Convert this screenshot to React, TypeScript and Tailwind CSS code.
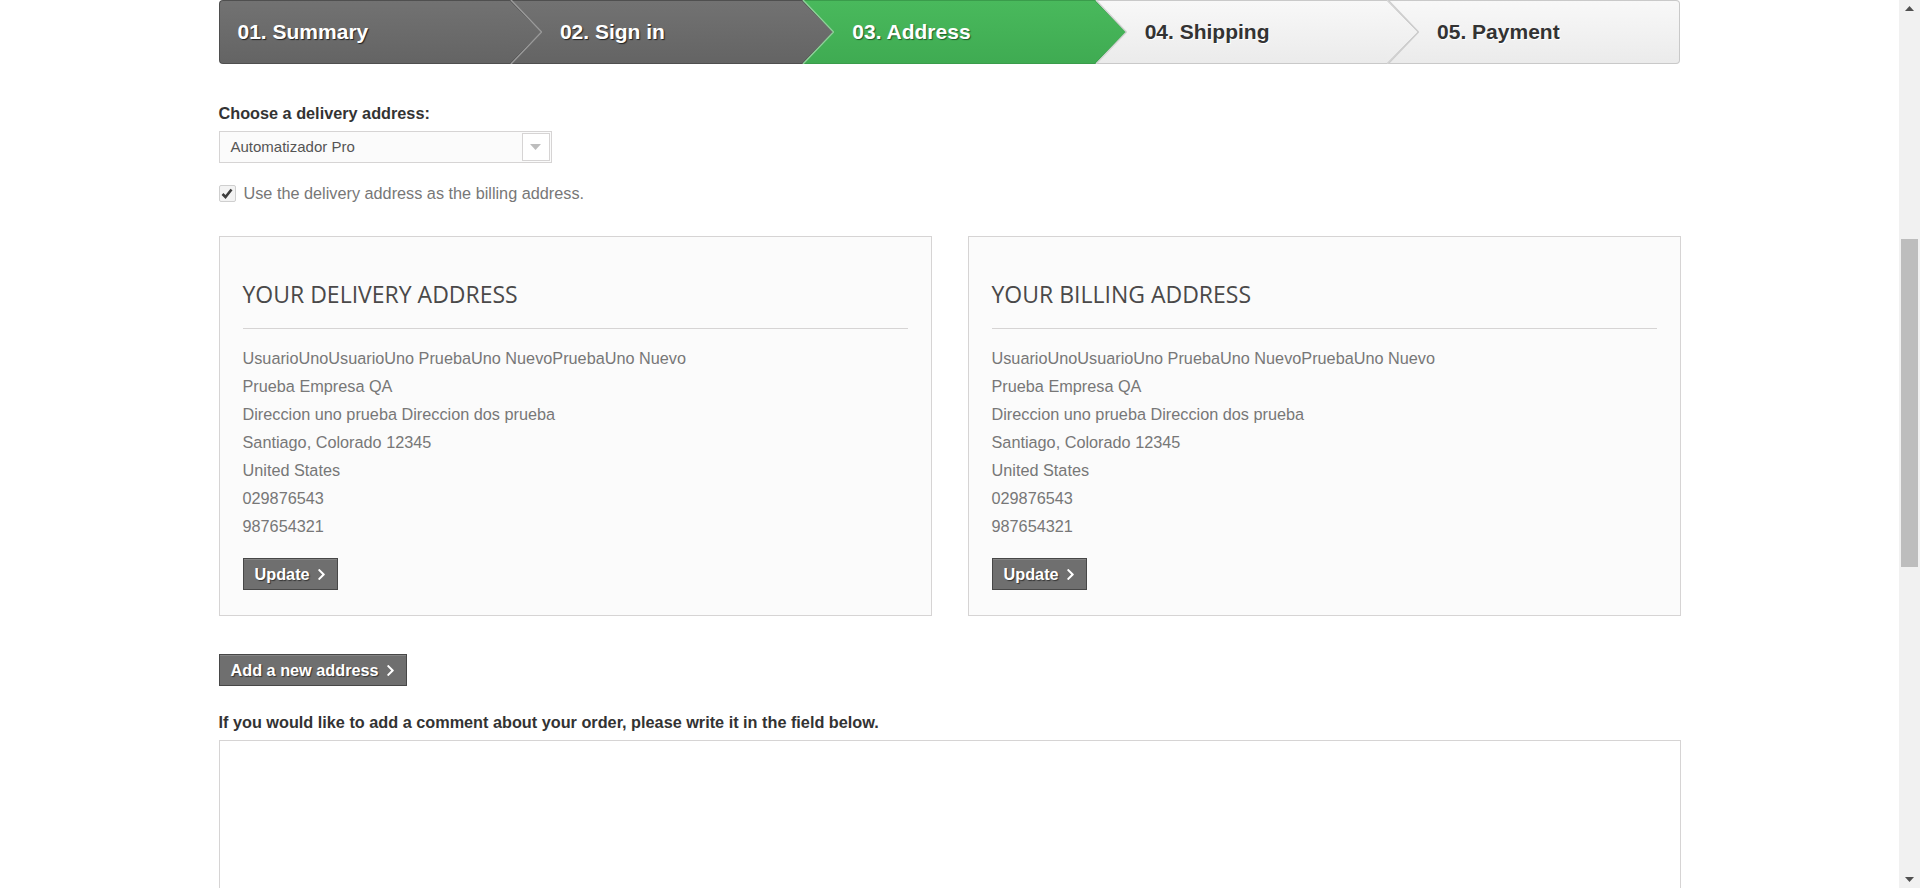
import { FaChevronRight } from 'react-icons/fa';

type Step = {
  label: string;
  tone: 'done' | 'current' | 'todo';
};

const steps: Step[] = [
  { label: '01. Summary', tone: 'done' },
  { label: '02. Sign in', tone: 'done' },
  { label: '03. Address', tone: 'current' },
  { label: '04. Shipping', tone: 'todo' },
  { label: '05. Payment', tone: 'todo' },
];

const tones = {
  done: {
    box: 'bg-linear-to-b from-[#727272] to-[#646464] border-[#4f4f4f] text-white [text-shadow:1px_1px_1px_#222]',
    top: '#727272',
    bottom: '#646464',
    edge: '#4f4f4f',
  },
  current: {
    box: 'bg-linear-to-b from-[#49b95c] to-[#3fab52] border-[#3a9c4b] text-white [text-shadow:1px_1px_1px_#1f5a28]',
    top: '#49b95c',
    bottom: '#3fab52',
    edge: '#3a9c4b',
  },
  todo: {
    box: 'bg-linear-to-b from-[#f8f8f8] to-[#ebebeb] border-[#c9c9c9] text-[#333] [text-shadow:1px_1px_0_#fff]',
    top: '#f8f8f8',
    bottom: '#ebebeb',
    edge: '#c9c9c9',
  },
};

const lineColors = ['#9a9a9a', '#8fcf9a', '#d4d4d4', '#cdcdcd'];

const address = [
  'UsuarioUnoUsuarioUno PruebaUno NuevoPruebaUno Nuevo',
  'Prueba Empresa QA',
  'Direccion uno prueba Direccion dos prueba',
  'Santiago, Colorado 12345',
  'United States',
  '029876543',
  '987654321',
];

function Steps() {
  return (
    <ul className="flex h-[64px]">
      {steps.map((s, i) => {
        const t = tones[s.tone];
        const first = i === 0;
        const last = i === steps.length - 1;
        return (
          <li
            key={s.label}
            className={`relative flex w-1/5 flex-none items-center border-y text-[21px] font-bold ${t.box} ${
              first ? 'rounded-l-[4px] border-l pl-[18px]' : 'pl-[49px]'
            } ${last ? 'rounded-r-[4px] border-r' : ''}`}
          >
            {s.label}
            {!last && (
              <svg
                className="absolute right-[-31px] top-[-1px] z-10"
                width="32"
                height="64"
                viewBox="0 0 32 64"
              >
                <defs>
                  <linearGradient id={`g${i}`} x1="0" y1="0" x2="0" y2="1">
                    <stop offset="0" stopColor={t.top} />
                    <stop offset="1" stopColor={t.bottom} />
                  </linearGradient>
                </defs>
                <polygon points="0,0 31,32 0,64" fill={`url(#g${i})`} />
                <polyline points="0,0.5 31,32 0,63.5" fill="none" stroke={t.edge} strokeWidth="1" />
                <polyline points="1,0 31.5,32 1,64" fill="none" stroke={lineColors[i]} strokeWidth="1.4" />
              </svg>
            )}
          </li>
        );
      })}
    </ul>
  );
}

function DarkButton({ label, className = '' }: { label: string; className?: string }) {
  return (
    <button
      className={`flex h-[32px] items-center gap-[5px] border border-[#474747] bg-[#6f6f6f] pl-[11px] pr-[9px] text-[16.25px] font-bold text-white shadow-[inset_0_1px_0_#858585] [text-shadow:1px_1px_1px_#333] ${className}`}
    >
      {label}
      <FaChevronRight size={13} />
    </button>
  );
}

function AddressCard({ title }: { title: string }) {
  return (
    <div className="border border-[#d6d4d4] bg-[#fbfbfb] px-[23px] pb-[25px] pt-[42px]">
      <h3 className="font-['Open_Sans',sans-serif] text-[23px] leading-[30px] text-[#4a4949]">{title}</h3>
      <div className="mt-[19px] border-t border-[#d6d4d4]" />
      <ul className="mt-[15px] text-[16.25px] leading-[28px] text-[#777]">
        {address.map((line) => (
          <li key={line}>{line}</li>
        ))}
      </ul>
      <DarkButton label="Update" className="mt-[18px]" />
    </div>
  );
}

function Scrollbar() {
  return (
    <div className="flex w-[21px] shrink-0 flex-col bg-[#f1f1f1]">
      <div className="flex h-[17px] items-center justify-center">
        <svg width="9" height="5" viewBox="0 0 9 5">
          <polygon points="0,5 4.5,0 9,5" fill="#505050" />
        </svg>
      </div>
      <div className="h-[222px]" />
      <div className="mx-[2px] h-[328px] bg-[#bdbdbd]" />
      <div className="flex-1" />
      <div className="flex h-[17px] items-center justify-center">
        <svg width="9" height="5" viewBox="0 0 9 5">
          <polygon points="0,0 4.5,5 9,0" fill="#505050" />
        </svg>
      </div>
    </div>
  );
}

export default function App() {
  return (
    <div className="flex h-[888px] overflow-hidden bg-white font-['Liberation_Sans',Arial,sans-serif]">
      <div className="min-w-0 flex-1">
        <div className="mx-auto w-[1462px]">
          <Steps />

          <p className="mt-[38px] text-[16.25px] font-bold leading-[22px] text-[#333]">
            Choose a delivery address:
          </p>
          <div className="mt-[7px] flex h-[32px] w-[333px] items-center border border-[#d6d4d4] bg-[#fbfbfb]">
            <span className="flex-1 pl-[11px] text-[15px] text-[#555]">Automatizador Pro</span>
            <span className="mr-[1px] flex h-[28px] w-[28px] items-center justify-center border border-[#d6d4d4] bg-white">
              <svg width="11" height="6" viewBox="0 0 11 6">
                <polygon points="0,0 11,0 5.5,6" fill="#bdbdbd" />
              </svg>
            </span>
          </div>

          <label className="mt-[19px] flex h-[22px] items-center gap-[8px] text-[16.25px] text-[#777]">
            <span className="flex h-[17px] w-[17px] items-center justify-center rounded-[2px] border border-[#cfcfcf] bg-[#f3f3f3]">
              <svg width="12" height="11" viewBox="0 0 12 11">
                <path d="M1.5 6 L4.5 9 L10.5 1.5" fill="none" stroke="#3d3d3d" strokeWidth="2.6" />
              </svg>
            </span>
            Use the delivery address as the billing address.
          </label>

          <div className="mt-[32px] grid grid-cols-2 gap-[36px]">
            <AddressCard title="YOUR DELIVERY ADDRESS" />
            <AddressCard title="YOUR BILLING ADDRESS" />
          </div>

          <DarkButton label="Add a new address" className="mt-[38px]" />

          <p className="mt-[25px] text-[16.25px] font-bold leading-[22px] text-[#333]">
            If you would like to add a comment about your order, please write it in the field below.
          </p>
          <textarea className="mt-[7px] block h-[200px] w-full resize-none border border-[#d6d4d4] bg-white" />
        </div>
      </div>
      <Scrollbar />
    </div>
  );
}
